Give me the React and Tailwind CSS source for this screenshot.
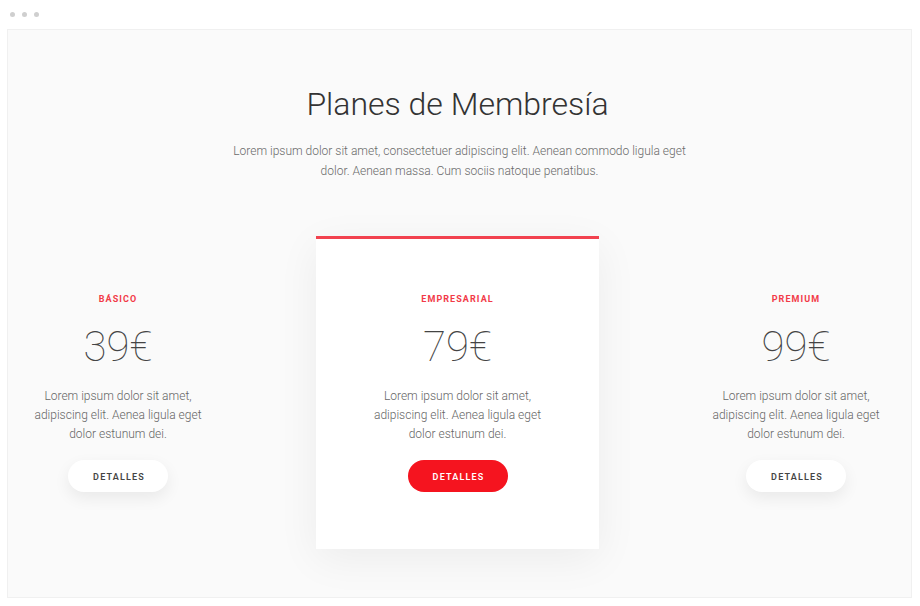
const plans = [
  { name: 'BÁSICO', price: '39€', featured: false },
  { name: 'EMPRESARIAL', price: '79€', featured: true },
  { name: 'PREMIUM', price: '99€', featured: false },
];

function PlanBody({ plan }) {
  return (
    <div className="flex flex-col items-center text-center">
      <div className="text-[9px] leading-[12px] font-bold tracking-[0.12em] text-[#f23a48]">
        {plan.name}
      </div>
      <div className="mt-[18px] text-[42px] leading-[48px] font-thin text-[#444]">
        {plan.price}
      </div>
      <p className="mt-[16px] w-[180px] text-[12px] leading-[19px] font-light text-[#666]">
        Lorem ipsum dolor sit amet, adipiscing elit. Aenea ligula eget dolor estunum dei.
      </p>
      <button
        className={
          plan.featured
            ? 'mt-[16px] h-[32px] w-[100px] rounded-full bg-[#f5141f] pt-[3px] pl-[2px] text-[9px] font-semibold tracking-[0.13em] text-white'
            : 'mt-[16px] h-[32px] w-[100px] rounded-full bg-white pt-[3px] pl-[2px] text-[9px] font-semibold tracking-[0.13em] text-[#444] shadow-[0_6px_16px_rgba(0,0,0,0.07)]'
        }
      >
        DETALLES
      </button>
    </div>
  );
}

export default function App() {
  return (
    <div className="h-[606px] w-[920px] bg-white font-['Roboto',sans-serif]">
      {/* window dots */}
      <div className="flex h-[29px] items-center gap-[7px] pl-[10px] pb-[1px]">
        <span className="h-[5px] w-[5px] rounded-full bg-[#cfcfcf]" />
        <span className="h-[5px] w-[5px] rounded-full bg-[#cfcfcf]" />
        <span className="h-[5px] w-[5px] rounded-full bg-[#cfcfcf]" />
      </div>

      <div className="ml-[7px] h-[569px] w-[905px] border border-[#f0f0f0] bg-[#fafafa]">
        <h1 className="mt-[54px] pr-[4px] text-center text-[32px] leading-[40px] font-light text-[#333]">
          Planes de Membresía
        </h1>
        <p className="mx-auto mt-[17px] w-[470px] text-center text-[12px] leading-[20px] font-light text-[#6a6a6a]">
          Lorem ipsum dolor sit amet, consectetuer adipiscing elit. Aenean commodo ligula eget dolor. Aenean massa. Cum sociis natoque penatibus.
        </p>

        <div className="mt-[55px] flex">
          <div className="w-[220px] pt-[57px]">
            <PlanBody plan={plans[0]} />
          </div>
          <div className="ml-[88px] h-[313px] w-[283px] border-t-[3px] border-[#f2424f] bg-white pt-[54px] shadow-[0_10px_40px_rgba(0,0,0,0.06)]">
            <PlanBody plan={plans[1]} />
          </div>
          <div className="ml-[87px] w-[220px] pt-[57px]">
            <PlanBody plan={plans[2]} />
          </div>
        </div>
      </div>
    </div>
  );
}
